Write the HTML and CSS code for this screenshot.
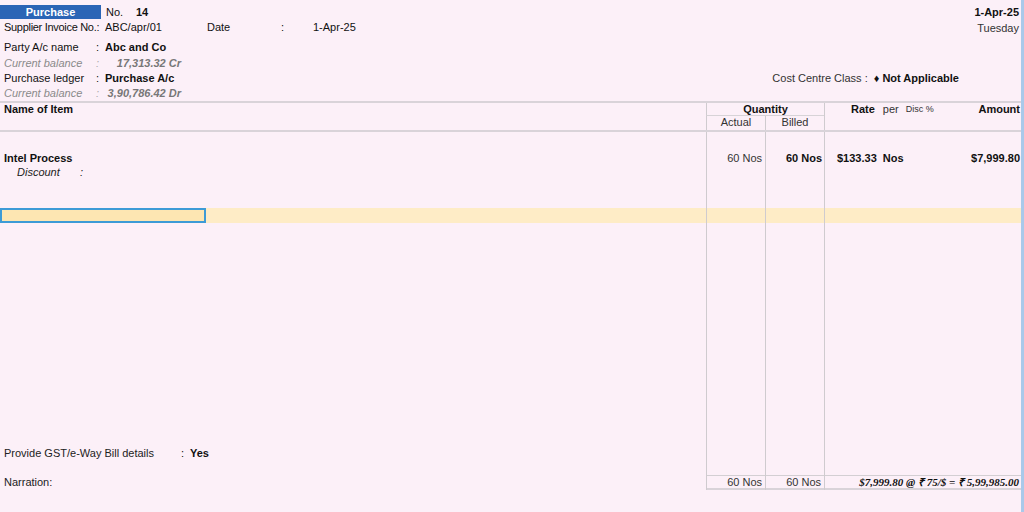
FILE: index.html
```html
<!DOCTYPE html>
<html>
<head>
<meta charset="utf-8">
<link rel="stylesheet" href="styles.css">
</head>
<body>
<div class="page">
  <div class="top">
    <div class="left">
      <div class="r1">
        <div class="vtype">Purchase</div>
        <span class="no">No.</span>
        <span class="b">14</span>
      </div>
      <div class="r2">
        <span class="lbl sup">Supplier Invoice No.:</span>
        <span class="val invno">ABC/apr/01</span>
        <span class="datel">Date</span>
        <span class="dcol">:</span>
        <span>1-Apr-25</span>
      </div>
      <div class="kv r3">
        <span class="lbl">Party A/c name</span><span class="col">:</span><span class="b">Abc and Co</span>
      </div>
      <div class="kv bal r4">
        <span class="lbl">Current balance</span><span class="col">:</span><span class="amt">17,313.32 Cr</span>
      </div>
      <div class="kv r5">
        <span class="lbl">Purchase ledger</span><span class="col">:</span><span class="b">Purchase A/c</span>
      </div>
      <div class="kv bal r6">
        <span class="lbl">Current balance</span><span class="col">:</span><span class="amt">3,90,786.42 Dr</span>
      </div>
    </div>
    <div class="right">
      <div class="b date">1-Apr-25</div>
      <div class="day">Tuesday</div>
      <div class="cc"><span class="ccl">Cost Centre Class :</span><span class="b">&#9830; Not Applicable</span></div>
    </div>
  </div>

  <div class="thead">
    <div class="h-name b">Name of Item</div>
    <div class="h-qty b">Quantity</div>
    <div class="h-act">Actual</div>
    <div class="h-bil">Billed</div>
    <div class="h-rate">
      <span class="b">Rate</span><span class="per">per</span><span class="disc">Disc %</span><span class="b h-amt">Amount</span>
    </div>
  </div>

  <div class="tbody">
    <div class="band"></div>
    <div class="inbox"></div>

    <div class="c-name item b">Intel Process</div>
    <div class="c-act item">60 Nos</div>
    <div class="c-bil item b">60 Nos</div>
    <div class="c-rate item b"><span class="rate">$133.33</span><span class="unit">Nos</span><span class="amount">$7,999.80</span></div>

    <div class="c-name disc-row"><span class="dl">Discount</span><span>:</span></div>

    <div class="c-name gst"><span class="gl">Provide GST/e-Way Bill details</span><span class="gc">:</span><span class="b">Yes</span></div>

    <div class="c-name narr">Narration:</div>
    <div class="c-act tot">60 Nos</div>
    <div class="c-bil tot">60 Nos</div>
    <div class="c-rate tot tamt">$7,999.80 @ &#8377;&nbsp;75/$ = &#8377;&nbsp;5,99,985.00</div>

    <div class="vline v2"></div>
    <div class="vline v3"></div>
    <div class="vline v4"></div>
  </div>
</div>
</body>
</html>
```

FILE: styles.css
```css
html, body {
  margin: 0;
  padding: 0;
  background: #fcf0f8;
}
body {
  font-family: "Liberation Sans", Arial, sans-serif;
  font-size: 11px;
  color: #111;
  white-space: nowrap;
}
.page {
  width: 1021px;
  height: 512px;
  border-right: 3px solid #a9c9ea;
  background: #fcf0f8;
  display: flex;
  flex-direction: column;
  overflow: hidden;
}
.b { font-weight: bold; }

/* top header */
.top {
  height: 101px;
  display: flex;
  justify-content: space-between;
}
.left {
  display: flex;
  flex-direction: column;
  line-height: 14px;
}
.r1 {
  margin-top: 5px;
  display: flex;
  align-items: center;
  height: 14px;
}
.vtype {
  width: 101px;
  height: 14px;
  background: #2b65b6;
  color: #fff;
  font-weight: bold;
  text-align: center;
  font-size: 11px;
  line-height: 14px;
}
.no { margin-left: 5px; width: 30px; }
.r2 {
  margin-top: 1px;
  display: flex;
  padding-left: 4px;
  height: 14px;
}
.sup { width: 101px; letter-spacing: -0.3px; }
.invno { width: 102px; }
.datel { width: 74px; }
.dcol { width: 32px; }
.kv {
  display: grid;
  grid-template-columns: 92px 9px auto;
  padding-left: 4px;
  height: 14px;
}
.r3 { margin-top: 6px; }
.r4 { margin-top: 2px; }
.r5 { margin-top: 1px; }
.r6 { margin-top: 1px; }
.bal { color: #8a8a8a; font-style: italic; }
.bal .col { color: #aaa; }
.amt {
  width: 76px;
  text-align: right;
  font-weight: bold;
  color: #777;
}
.right {
  display: flex;
  flex-direction: column;
  align-items: flex-end;
  line-height: 14px;
  padding-right: 2px;
}
.date { margin-top: 5px; }
.day { margin-top: 2px; color: #333; }
.cc {
  margin-top: 36px;
  margin-right: 60px;
  display: flex;
}
.ccl { color: #333; margin-right: 6px; }

/* table header */
.thead {
  border-top: 2px solid #d9d3d9;
  border-bottom: 2px solid #d9d3d9;
  display: grid;
  grid-template-columns: 706px 59px 59px 1fr;
  grid-template-rows: 13px 14px;
  line-height: 13px;
}
.h-name { grid-column: 1; grid-row: 1 / 3; padding-left: 4px; }
.h-qty {
  grid-column: 2 / 4; grid-row: 1;
  text-align: center;
  border-left: 1px solid #cfcbcf;
  border-bottom: 1px solid #d7d3d7;
}
.h-act, .h-bil {
  grid-row: 2;
  border-left: 1px solid #cfcbcf;
  text-align: center;
  color: #333;
}
.h-act { grid-column: 2; }
.h-bil { grid-column: 3; }
.h-rate {
  grid-column: 4; grid-row: 1 / 3;
  border-left: 1px solid #cfcbcf;
  display: flex;
  align-items: flex-start;
  padding-right: 1px;
}
.h-rate .b:first-child { margin-left: 26px; }
.per { margin-left: 8px; color: #333; }
.disc { margin-left: 7px; font-size: 9px; color: #333; }
.h-amt { margin-left: auto; }

/* table body */
.tbody {
  height: 358px;
  display: grid;
  grid-template-columns: 706px 59px 59px 1fr;
  grid-template-rows: 19px 14px 15px 28px 15px 1fr 14px 15px 15px;
  line-height: 14px;
}
.band {
  grid-column: 1 / -1;
  grid-row: 5;
  background: #feecc6;
}
.inbox {
  grid-column: 1;
  grid-row: 5;
  width: 202px;
  border: 2px solid #3d9bd6;
  background: #fde6b2;
}
.vline {
  grid-row: 1 / -1;
  border-left: 1px solid #cfcbcf;
}
.v2 { grid-column: 2; }
.v3 { grid-column: 3; }
.v4 { grid-column: 4; }

.item { grid-row: 2; }
.c-name { grid-column: 1; padding-left: 4px; }
.c-act { grid-column: 2; text-align: right; padding-right: 3px; color: #333; }
.c-bil { grid-column: 3; text-align: right; padding-right: 2px; }
.c-rate { grid-column: 4; }
.c-rate.item { display: flex; padding-right: 1px; }
.rate { margin-left: 13px; }
.unit { margin-left: 6px; }
.amount { margin-left: auto; }

.disc-row { grid-row: 3; font-style: italic; padding-left: 17px; color: #222; }
.dl { display: inline-block; width: 63px; }

.gst { grid-row: 7; }
.gl { display: inline-block; width: 177px; color: #222; }
.gc { display: inline-block; width: 9px; }

.narr { grid-row: 9; color: #222; }
.tot {
  grid-row: 9;
  border-top: 1px solid #d3cfd3;
  border-bottom: 2px solid #d9d3d9;
  line-height: 13px;
}
.c-act.tot, .c-bil.tot { color: #333; }
.c-bil.tot { padding-right: 3px; font-weight: normal; }
.tamt {
  text-align: right;
  font-family: "Liberation Serif", "Times New Roman", serif;
  font-weight: bold;
  font-style: italic;
  font-size: 11px;
  padding-right: 2px;
}
```
